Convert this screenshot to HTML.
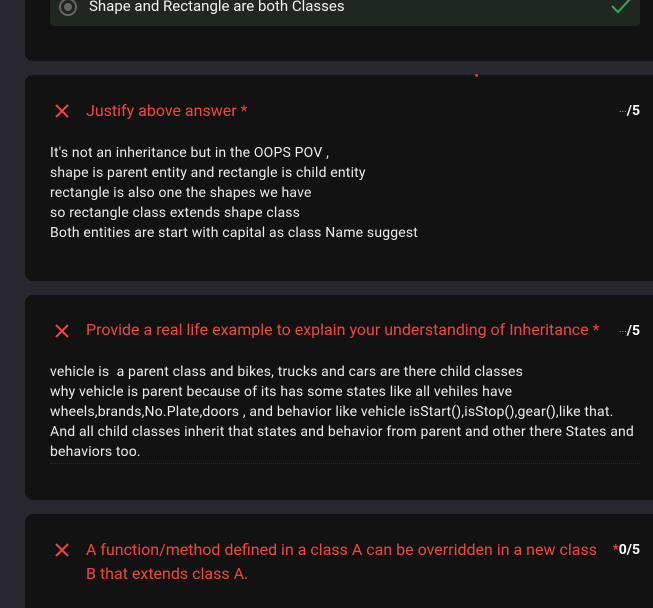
<!DOCTYPE html>
<html><head><meta charset="utf-8"><style>
*{margin:0;padding:0;box-sizing:border-box}
html,body{width:653px;height:608px;overflow:hidden}
body{background:#28262e;font-family:"Roboto","Liberation Sans",sans-serif;position:relative}
.card{position:absolute;left:25px;width:640px;background:#121212;border-radius:8px}
.opt{position:absolute;left:50px;top:-12px;width:590px;height:38px;background:#1f2720;border-radius:4px}
.radio{position:absolute;left:59px;top:-2px;width:18px;height:18px;border:2px solid #666;border-radius:50%}
.radio:after{content:"";position:absolute;left:3px;top:3px;width:8px;height:8px;border-radius:50%;background:#666}
.optt{position:absolute;left:89px;top:-3px;color:#f2f2f2;font-size:15px;white-space:nowrap}
.x{position:absolute;left:55px;width:14px;height:14px}
.title{position:absolute;left:86px;color:#f2453d;font-size:16px;letter-spacing:0px;white-space:nowrap;line-height:24px}
.score{position:absolute;right:13px;color:#fff;font-size:14px;font-weight:bold}
.score span{color:#aaa;font-weight:normal;font-size:10px}
.body{position:absolute;left:50px;color:#ececec;font-size:14px;letter-spacing:0.18px;line-height:20px;white-space:nowrap}
</style></head><body>
<div class="card" style="top:-10px;height:71px"></div>
<div class="opt"></div>
<div class="radio"></div>
<div class="optt">Shape and Rectangle are both Classes</div>
<svg style="position:absolute;left:610px;top:-2px" width="22" height="16"><path d="M2 8 L8 14 L20 1" stroke="#3ca553" stroke-width="2" fill="none"/></svg>

<div class="card" style="top:75px;height:206px"></div>
<div style="position:absolute;left:475px;top:74px;width:3px;height:3px;background:#e33;border-radius:50%"></div>
<svg class="x" style="top:104px" viewBox="0 0 14 14"><path d="M1 1L13 13M13 1L1 13" stroke="#f2453d" stroke-width="2"/></svg>
<div class="title" style="top:99px">Justify above answer *</div>
<div class="score" style="top:103px"><span>···</span>/5</div>
<div class="body" style="top:143px">It's not an inheritance but in the OOPS POV ,<br>shape is parent entity and rectangle is child entity<br>rectangle is also one the shapes we have<br>so rectangle class extends shape class<br>Both entities are start with capital as class Name suggest</div>

<div class="card" style="top:295px;height:205px"></div>
<svg class="x" style="top:324px" viewBox="0 0 14 14"><path d="M1 1L13 13M13 1L1 13" stroke="#f2453d" stroke-width="2"/></svg>
<div class="title" style="top:318px">Provide a real life example to explain your understanding of Inheritance *</div>
<div class="score" style="top:323px"><span>···</span>/5</div>
<div class="body" style="top:362px">vehicle is &nbsp;a parent class and bikes, trucks and cars are there child classes<br>why vehicle is parent because of its has some states like all vehiles have<br>wheels,brands,No.Plate,doors , and behavior like vehicle isStart(),isStop(),gear(),like that.<br>And all child classes inherit that states and behavior from parent and other there States and<br>behaviors too.</div>
<div style="position:absolute;left:50px;top:463px;width:590px;border-top:1px dotted #2a2a2a"></div>

<div class="card" style="top:514px;height:94px;border-radius:8px 8px 0 0"></div>
<svg class="x" style="top:543px" viewBox="0 0 14 14"><path d="M1 1L13 13M13 1L1 13" stroke="#f2453d" stroke-width="2"/></svg>
<div class="title" style="top:538px">A function/method defined in a class A can be overridden in a new class<br>B that extends class A.</div>
<div class="score" style="top:542px"><span style="color:#f2453d;font-size:14px">*</span>0/5</div>
</body></html>
